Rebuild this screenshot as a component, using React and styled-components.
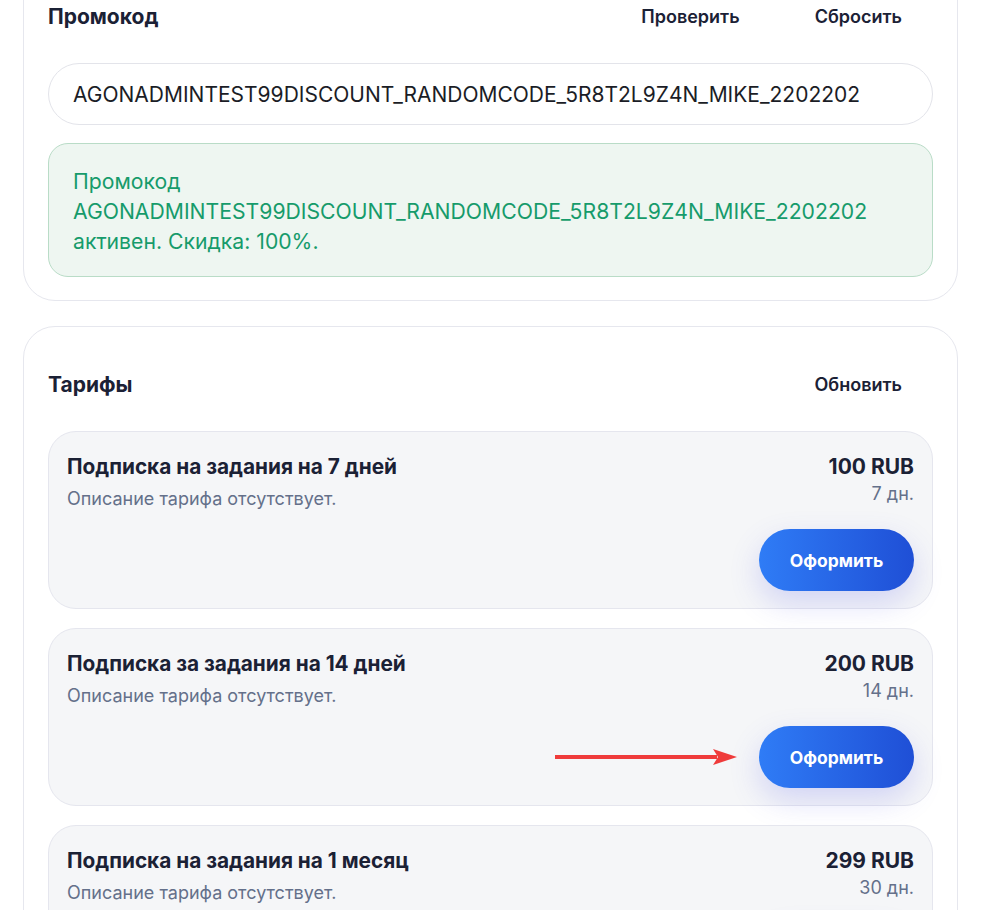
import React, { useState } from 'react'
import styled, { createGlobalStyle } from 'styled-components'

const GlobalStyle = createGlobalStyle`
    * { box-sizing: border-box; }
    body {
        margin: 0;
        background: #ffffff;
        font-family: Inter, "Noto Sans", "Liberation Sans", sans-serif;
        color: #1b2135;
        overflow: hidden;
    }
`

const Page = styled.main`
    width: 935px;
    margin: -42px 0 0 23px;
    display: flex;
    flex-direction: column;
    gap: 25px;
`

const Card = styled.section`
    background: #fff;
    border: 1px solid #e6e7ee;
    border-radius: 32px;
    padding: 32px 24px 23px;
    display: flex;
    flex-direction: column;
    gap: ${p => p.$gap || 18}px;
`

const Header = styled.div`
    display: flex;
    align-items: center;
    justify-content: space-between;
    height: 50px;
    margin-bottom: ${p => p.$space || 0}px;
`

const Title = styled.h2`
    margin: 0;
    font-size: 21px;
    font-weight: 700;
    color: #1b2135;
`

const Actions = styled.div`
    display: flex;
    gap: 13px;
`

const GhostButton = styled.button`
    border: none;
    background: transparent;
    font-family: inherit;
    font-size: 18px;
    font-weight: 600;
    color: #1b2135;
    padding: 12px 31px;
    cursor: pointer;
`

const CodeInput = styled.input`
    width: 100%;
    height: 62px;
    border: 1px solid #e3e4ea;
    border-radius: 31px;
    padding: 0 24px;
    font-family: inherit;
    font-size: 21px;
    color: #1b1d26;
    background: #fff;
    outline: none;
`

const Notice = styled.div`
    background: #eef6f1;
    border: 1px solid #b9dcc7;
    border-radius: 20px;
    padding: 22px 24px 20px;
    font-size: 21.2px;
    line-height: 30px;
    color: #169b6b;
    overflow-wrap: anywhere;
`

const PlanList = styled.div`
    display: flex;
    flex-direction: column;
    gap: 19px;
`

const Plan = styled.article`
    position: relative;
    background: #f5f6f8;
    border: 1px solid #e5e6ee;
    border-radius: 28px;
    padding: 22px 18px 17px;
    display: flex;
    flex-direction: column;
    gap: 20px;
`

const PlanTop = styled.div`
    display: flex;
    justify-content: space-between;
    align-items: flex-start;
`

const PlanInfo = styled.div`
    display: flex;
    flex-direction: column;
    gap: 9px;
`

const PlanName = styled.h3`
    margin: 0;
    font-size: 20.8px;
    line-height: 26px;
    font-weight: 700;
    color: #1b2135;
`

const PlanDesc = styled.p`
    margin: 0;
    font-size: 18px;
    line-height: 20px;
    color: #64708a;
`

const PriceBox = styled.div`
    display: flex;
    flex-direction: column;
    align-items: flex-end;
    gap: 4px;
`

const Price = styled.div`
    font-size: 21px;
    line-height: 26px;
    font-weight: 700;
    color: #1b2135;
`

const Period = styled.div`
    font-size: 18px;
    line-height: 20px;
    color: #64708a;
`

const BuyRow = styled.div`
    display: flex;
    justify-content: flex-end;
`

const BuyButton = styled.button`
    width: 155px;
    height: 62px;
    border: none;
    border-radius: 31px;
    background: linear-gradient(90deg, #2f7cf6 0%, #1f4fd6 100%);
    box-shadow: 0 12px 30px rgba(88, 92, 230, 0.22);
    color: #fff;
    font-family: inherit;
    font-size: 17.5px;
    font-weight: 700;
    cursor: pointer;
`

const Pointer = styled.svg`
    position: absolute;
    left: 506px;
    top: 120px;
    pointer-events: none;
`

const CODE = 'AGONADMINTEST99DISCOUNT_RANDOMCODE_5R8T2L9Z4N_MIKE_2202202'

const plans = [
    { name: 'Подписка на задания на 7 дней', price: '100 RUB', period: '7 дн.' },
    { name: 'Подписка за задания на 14 дней', price: '200 RUB', period: '14 дн.', marked: true },
    { name: 'Подписка на задания на 1 месяц', price: '299 RUB', period: '30 дн.' },
]

function PlanCard({ name, price, period, marked }) {
    return (
        <Plan>
            <PlanTop>
                <PlanInfo>
                    <PlanName>{name}</PlanName>
                    <PlanDesc>Описание тарифа отсутствует.</PlanDesc>
                </PlanInfo>
                <PriceBox>
                    <Price>{price}</Price>
                    <Period>{period}</Period>
                </PriceBox>
            </PlanTop>
            <BuyRow>
                <BuyButton>Оформить</BuyButton>
            </BuyRow>
            {marked && (
                <Pointer width="184" height="16" viewBox="0 0 184 16">
                    <rect x="0" y="6" width="162" height="4" fill="#ef3b3b" />
                    <path d="M158 0 L182 8 L158 16 L163 8 Z" fill="#ef3b3b" />
                </Pointer>
            )}
        </Plan>
    )
}

export default function App() {
    const [code, setCode] = useState(CODE)

    return (
        <>
            <GlobalStyle />
            <Page>
                <Card $gap={18}>
                    <Header $space={4}>
                        <Title>Промокод</Title>
                        <Actions>
                            <GhostButton>Проверить</GhostButton>
                            <GhostButton>Сбросить</GhostButton>
                        </Actions>
                    </Header>
                    <CodeInput value={code} onChange={e => setCode(e.target.value)} />
                    <Notice>
                        Промокод {CODE} активен. Скидка: 100%.
                    </Notice>
                </Card>
                <Card $gap={22}>
                    <Header>
                        <Title>Тарифы</Title>
                        <GhostButton>Обновить</GhostButton>
                    </Header>
                    <PlanList>
                        {plans.map(p => <PlanCard key={p.name} {...p} />)}
                    </PlanList>
                </Card>
            </Page>
        </>
    )
}
